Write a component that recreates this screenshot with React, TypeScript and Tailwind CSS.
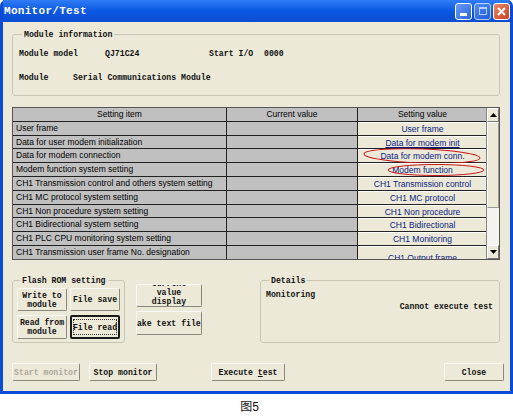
import React from 'react';

const mono = { fontFamily: '"Liberation Mono", "DejaVu Sans Mono", monospace' };

const rows: { item: string; value: string; underline?: boolean }[] = [
  { item: 'User frame', value: 'User frame' },
  { item: 'Data for user modem initialization', value: 'Data for modem init', underline: true },
  { item: 'Data for modem connection', value: 'Data for modem conn.' },
  { item: 'Modem function system setting', value: 'Modem function' },
  { item: 'CH1 Transmission control and others system setting', value: 'CH1 Transmission control' },
  { item: 'CH1 MC protocol system setting', value: 'CH1 MC protocol' },
  { item: 'CH1 Non procedure system setting', value: 'CH1 Non procedure' },
  { item: 'CH1 Bidirectional system setting', value: 'CH1 Bidirectional' },
  { item: 'CH1 PLC CPU monitoring system setting', value: 'CH1 Monitoring' },
  { item: 'CH1 Transmission user frame No. designation', value: 'CH1 Output frame' },
];

const XpButton: React.FC<{
  className?: string;
  disabled?: boolean;
  focused?: boolean;
  children: React.ReactNode;
}> = ({ className = '', disabled, focused, children }) => (
  <div
    className={`flex items-center justify-center overflow-hidden whitespace-nowrap rounded-[2px] border bg-[#ece9d8] text-center text-[8.2px] font-bold leading-[9px] ${
      focused ? 'border-[#1a1a1a] border-2' : 'border-[#f8f8f4] border-r-[#8a887c] border-b-[#8a887c]'
    } ${disabled ? 'text-[#aca899]' : 'text-[#111]'} ${className}`}
    style={mono}
  >
    {focused ? (
      <div className="flex h-[calc(100%-4px)] w-[calc(100%-2px)] items-center justify-center border border-dotted border-[#333]">
        {children}
      </div>
    ) : (
      children
    )}
  </div>
);

function GroupBox({
  label,
  className = '',
  children,
}: {
  label: string;
  className?: string;
  children: React.ReactNode;
}) {
  return (
    <fieldset className={`rounded-[3px] border border-[#c9c6b6] ${className}`}>
      <legend className="ml-[3px] px-[2px] text-[8.2px] font-bold leading-[9px] text-[#111]" style={mono}>
        {label}
      </legend>
      {children}
    </fieldset>
  );
}

export default function App() {
  return (
    <div className="flex h-[420px] w-[513px] flex-col bg-white">
      {/* window frame */}
      <div className="flex h-[394px] flex-col rounded-t-[6px] bg-[#0a4bd6] px-[3px] pb-[3px]">
        <div className="flex h-[22px] items-center justify-between bg-gradient-to-b from-[#2f7cf5] via-[#0b58e2] to-[#0a4dd0] pl-[1px]">
          <span className="text-[11px] font-bold tracking-[0.3px] text-white" style={mono}>
            Monitor/Test
          </span>
          <div className="flex gap-[2px]">
            <div className="flex h-[17px] w-[17px] items-end justify-center rounded-[3px] border border-white bg-gradient-to-br from-[#6b9cf7] to-[#2a62e0] pb-[3px]">
              <div className="h-[3px] w-[7px] bg-white" />
            </div>
            <div className="flex h-[17px] w-[17px] items-center justify-center rounded-[3px] border border-white bg-gradient-to-br from-[#6b9cf7] to-[#2a62e0] opacity-70">
              <div className="h-[8px] w-[8px] border border-t-2 border-white" />
            </div>
            <div className="flex h-[17px] w-[17px] items-center justify-center rounded-[3px] border border-white bg-gradient-to-br from-[#e8896a] to-[#c8401c]">
              <svg width="9" height="9" viewBox="0 0 9 9">
                <path d="M1 1 L8 8 M8 1 L1 8" stroke="white" strokeWidth="2" />
              </svg>
            </div>
          </div>
        </div>

        <div className="flex flex-1 flex-col bg-[#ece9d8] px-[9px] pt-[8px]">
          <GroupBox label="Module information" className="h-[66px] w-[488px] px-[6px]">
            <div className="mt-[10px] flex text-[8.2px] font-bold leading-[9px] text-[#111]" style={mono}>
              <span className="w-[86px]">Module model</span>
              <span className="w-[104px]">QJ71C24</span>
              <span className="w-[55px]">Start I/O</span>
              <span>0000</span>
            </div>
            <div className="mt-[15px] flex text-[8.2px] font-bold leading-[9px] text-[#111]" style={mono}>
              <span className="w-[54px]">Module</span>
              <span>Serial Communications Module</span>
            </div>
          </GroupBox>

          {/* settings table */}
          <div className="mt-[11px] flex h-[153px] w-[488px] border border-[#555] bg-[#ece9d8]">
            <div
              className="grid h-full w-[474px] grid-cols-[214px_131px_129px] auto-rows-[13.8px] overflow-hidden text-[8.5px] leading-[13px]"
              style={{ fontFamily: '"Liberation Sans", Arial, sans-serif' }}
            >
              <div className="border-b border-r border-[#222] bg-[#c0c0c0] text-center">Setting item</div>
              <div className="border-b border-r border-[#222] bg-[#c0c0c0] text-center">Current value</div>
              <div className="border-b border-[#222] bg-[#c0c0c0] text-center">Setting value</div>
              {rows.map((r, i) => (
                <React.Fragment key={i}>
                  <div className="overflow-hidden whitespace-nowrap border-b border-r border-[#222] bg-[#c0c0c0] pl-[3px] text-[#000]">
                    {r.item}
                  </div>
                  <div className="border-b border-r border-[#222] bg-[#c0c0c0]" />
                  <div className="relative whitespace-nowrap border-b border-t border-[#222] border-t-white bg-[#ece9d8] text-center text-[#0a1a80]">
                    <span className={`${r.underline ? 'underline' : ''} ${i === rows.length - 1 ? 'relative top-[5px]' : ''}`}>
                      {r.value}
                    </span>
                    {i === 2 && (
                      <svg className="absolute left-[3px] top-[-3px]" width="122" height="18" viewBox="0 0 122 18">
                        <ellipse cx="61" cy="9" rx="58" ry="7" fill="none" stroke="#c81818" strokeWidth="1" transform="rotate(2 61 9)" />
                      </svg>
                    )}
                    {i === 3 && (
                      <svg className="absolute left-[28px] top-[-2px]" width="100" height="16" viewBox="0 0 100 16">
                        <ellipse cx="50" cy="8" rx="48" ry="5.5" fill="none" stroke="#c81818" strokeWidth="1" />
                      </svg>
                    )}
                  </div>
                </React.Fragment>
              ))}
            </div>
            {/* vertical scrollbar */}
            <div className="flex w-[13px] flex-col border-l border-[#888] bg-[#f4f3ee]">
              <div className="flex h-[14px] items-center justify-center border border-[#fff] border-b-[#777] border-r-[#777] bg-[#ece9d8]">
                <svg width="7" height="4" viewBox="0 0 7 4">
                  <path d="M0 4 L3.5 0 L7 4 Z" fill="#000" />
                </svg>
              </div>
              <div className="flex-1 bg-[#f4f3ee]">
                <div className="h-[86px] border border-[#fff] border-b-[#999] border-r-[#999] bg-[#ece9d8]" />
              </div>
              <div className="flex h-[14px] items-center justify-center border border-[#fff] border-b-[#777] border-r-[#777] bg-[#ece9d8]">
                <svg width="7" height="4" viewBox="0 0 7 4">
                  <path d="M0 0 L7 0 L3.5 4 Z" fill="#000" />
                </svg>
              </div>
            </div>
          </div>

          <div className="mt-[16px] flex">
            <GroupBox label="Flash ROM setting" className="h-[67px] w-[113px] px-[4px]">
              <div className="mt-[3px] grid grid-cols-[50px_50px] gap-x-[3px] gap-y-[4px]">
                <XpButton className="h-[23px]">
                  Write to
                  <br />
                  module
                </XpButton>
                <XpButton className="h-[23px]">File save</XpButton>
                <XpButton className="h-[24px]">
                  Read from
                  <br />
                  module
                </XpButton>
                <XpButton className="h-[24px]" focused>
                  File read
                </XpButton>
              </div>
            </GroupBox>

            <div className="ml-[11px] mt-[8px] flex flex-col gap-[4px]">
              <XpButton className="h-[23px] w-[66px]">
                <div className="-mt-[6px]">
                  Current
                  <br />
                  value
                  <br />
                  display
                </div>
              </XpButton>
              <XpButton className="h-[24px] w-[66px] justify-start">
                <span className="-ml-[5px]">Make text file</span>
              </XpButton>
            </div>

            <GroupBox label="Details" className="ml-[58px] h-[67px] w-[240px] px-[5px]">
              <div className="text-[8.2px] font-bold leading-[9px] text-[#111]" style={mono}>
                <div className="mt-[5px]">Monitoring</div>
                <div className="mt-[3px] pr-[1px] text-right">Cannot execute test</div>
              </div>
            </GroupBox>
          </div>

          <div className="mt-[20px] flex">
            <XpButton className="h-[18px] w-[68px]" disabled>
              Start monitor
            </XpButton>
            <XpButton className="ml-[9px] h-[18px] w-[68px]">Stop monitor</XpButton>
            <XpButton className="ml-[54px] h-[18px] w-[74px]">
              <span>
                Execute <span className="underline">t</span>est
              </span>
            </XpButton>
            <XpButton className="ml-auto mr-[-3px] h-[18px] w-[60px]">Close</XpButton>
          </div>
        </div>
      </div>

      <div
        className="flex flex-1 items-center justify-center pr-[14px] text-[12px] text-[#111]"
        style={{ fontFamily: '"Liberation Sans", "Noto Sans CJK SC", sans-serif' }}
      >
        图5
      </div>
    </div>
  );
}
